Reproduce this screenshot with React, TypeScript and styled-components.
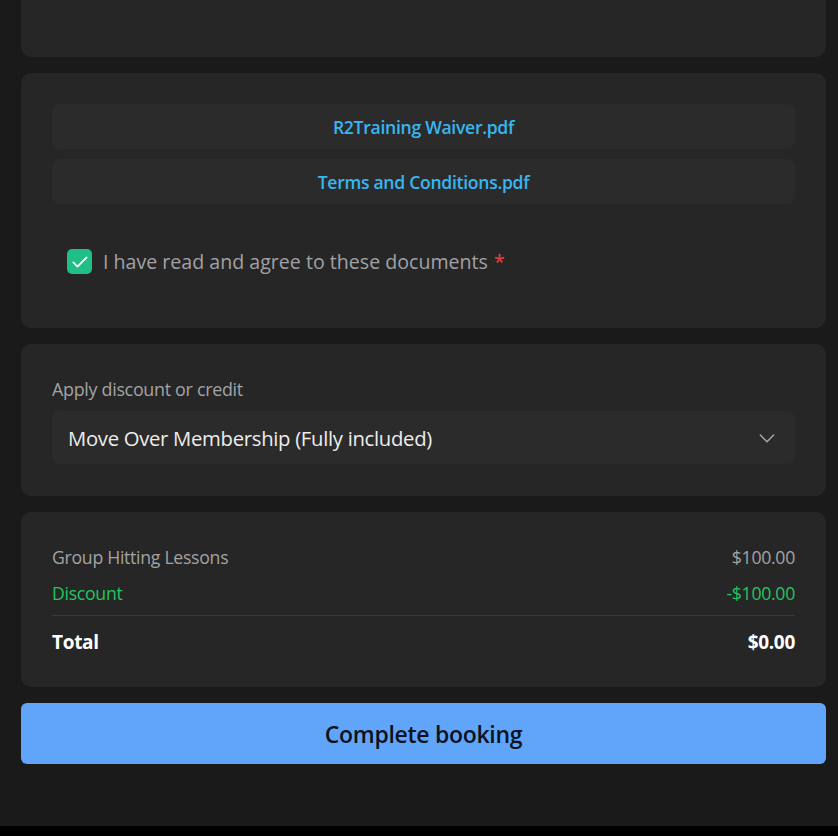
import styled, { createGlobalStyle } from "styled-components";

const GlobalStyle = createGlobalStyle`
  html, body {
    margin: 0;
    padding: 0;
    background: #000;
  }
  body {
    font-family: "Open Sans", "Noto Sans", sans-serif;
  }
`

const Page = styled.div`
  background: #1a1a1a;
  height: 826px;
  overflow: hidden;
  display: flex;
  flex-direction: column;
  gap: 16px;
  padding: 0 12px 0 21px;
  box-sizing: border-box;
`

const Card = styled.div<{ $pad?: string }>`
  background: #262626;
  border-radius: 10px;
  padding: ${(p) => p.$pad || "31px"};
  display: flex;
  flex-direction: column;
`

const TopCard = styled(Card)`
  height: 57px;
  border-radius: 0 0 10px 10px;
  padding: 0;
  flex-shrink: 0;
`

const DocList = styled.div`
  display: flex;
  flex-direction: column;
  gap: 10px;
`

const DocButton = styled.a`
  display: flex;
  align-items: center;
  justify-content: center;
  height: 45px;
  background: #2b2b2b;
  border-radius: 8px;
  color: #38b6f0;
  font-size: 17.6px;
  font-weight: 600;
  letter-spacing: -0.3px;
  text-decoration: none;
  cursor: pointer;
`

const AgreeRow = styled.label`
  display: flex;
  align-items: center;
  gap: 11px;
  margin: 44px 0 22px 15px;
  color: #a1a1a6;
  font-size: 19.6px;
  cursor: pointer;
`

const CheckBox = styled.span`
  width: 25px;
  height: 25px;
  border-radius: 5px;
  background: #20bf86;
  display: flex;
  align-items: center;
  justify-content: center;
  flex-shrink: 0;
`

const Required = styled.span`
  color: #ef4444;
  margin-left: 6px;
`

const FieldLabel = styled.div`
  color: #a3a3a3;
  font-size: 17.9px;
  letter-spacing: -0.3px;
  margin-bottom: 10px;
  line-height: 24px;
`

const Select = styled.div`
  height: 53px;
  background: #2b2b2b;
  border-radius: 8px;
  display: flex;
  align-items: center;
  justify-content: space-between;
  padding: 0 18px 0 16px;
  color: #ededed;
  font-size: 20.3px;
  letter-spacing: -0.3px;
  cursor: pointer;
`

const SummaryRow = styled.div<{ $tone?: "muted" | "green" | "total" }>`
  display: flex;
  justify-content: space-between;
  align-items: center;
  height: 36px;
  font-size: ${(p) => (p.$tone === "total" ? "19px" : "17.7px")};
  font-weight: ${(p) => (p.$tone === "total" ? 700 : 400)};
  letter-spacing: -0.3px;
  color: ${(p) =>
    p.$tone === "green" ? "#22c55e" : p.$tone === "total" ? "#ffffff" : "#a3a3a3"};
`

const Divider = styled.div`
  height: 1px;
  background: #3a3a3a;
  margin: 4px 0 8px;
`

const SubmitButton = styled.button`
  height: 61px;
  flex-shrink: 0;
  border: none;
  border-radius: 6px;
  background: #60a5fa;
  color: #0b1220;
  font-family: inherit;
  font-size: 23px;
  font-weight: 600;
  letter-spacing: -0.3px;
  cursor: pointer;
`

export default function App() {
    return (
        <>
            <GlobalStyle />
            <Page>
                <TopCard />
                <Card $pad="31px 31px 31px">
                    <DocList>
                        <DocButton>R2Training Waiver.pdf</DocButton>
                        <DocButton>Terms and Conditions.pdf</DocButton>
                    </DocList>
                    <AgreeRow>
                        <CheckBox>
                            <svg width="20" height="20" viewBox="0 0 24 24" fill="none" stroke="#fff" strokeWidth="2" strokeLinecap="round" strokeLinejoin="round">
                                <path d="M4 12.5l5 5L20 6.5" />
                            </svg>
                        </CheckBox>
                        <span>I have read and agree to these documents<Required>*</Required></span>
                    </AgreeRow>
                </Card>
                <Card $pad="33px 31px 32px">
                    <FieldLabel>Apply discount or credit</FieldLabel>
                    <Select>
                        <span>Move Over Membership (Fully included)</span>
                        <svg width="20" height="20" viewBox="0 0 24 24" fill="none" stroke="#a3a8b0" strokeWidth="1.8" strokeLinecap="round" strokeLinejoin="round">
                            <path d="M4 8.5l8 8 8-8" />
                        </svg>
                    </Select>
                </Card>
                <Card $pad="27px 31px 27px">
                    <SummaryRow $tone="muted">
                        <span>Group Hitting Lessons</span>
                        <span>$100.00</span>
                    </SummaryRow>
                    <SummaryRow $tone="green">
                        <span>Discount</span>
                        <span>-$100.00</span>
                    </SummaryRow>
                    <Divider />
                    <SummaryRow $tone="total">
                        <span>Total</span>
                        <span>$0.00</span>
                    </SummaryRow>
                </Card>
                <SubmitButton>Complete booking</SubmitButton>
            </Page>
        </>
    )
}
